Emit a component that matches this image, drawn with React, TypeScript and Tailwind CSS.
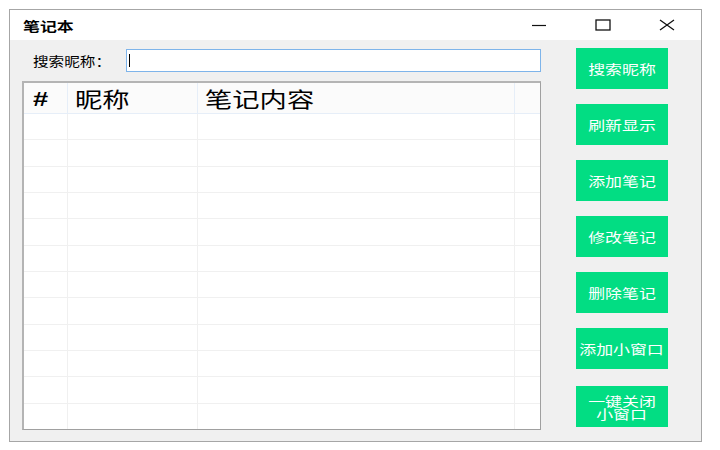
import React from "react"

const font = { fontFamily: '"Noto Sans CJK SC", "Noto Sans", sans-serif' }

const buttons = ["搜索昵称", "刷新显示", "添加笔记", "修改笔记", "删除笔记", "添加小窗口"]

function TitleBar() {
  return (
    <div className="flex h-[30px] items-center justify-between bg-white">
      <span className="ml-[13px] inline-block origin-left scale-x-[1.3] text-[13px] font-semibold leading-none text-black">
        笔记本
      </span>
      <div className="mr-[2px] flex h-full items-center">
        <div className="flex w-[64px] justify-center">
          <svg width="16" height="12" viewBox="0 0 16 12">
            <line x1="1" y1="6.5" x2="15" y2="6.5" stroke="#111" strokeWidth="1.2" />
          </svg>
        </div>
        <div className="flex w-[64px] justify-center">
          <svg width="16" height="12" viewBox="0 0 16 12">
            <rect x="1" y="1" width="14" height="10" fill="none" stroke="#111" strokeWidth="1.3" />
          </svg>
        </div>
        <div className="flex w-[64px] justify-center">
          <svg width="16" height="12" viewBox="0 0 16 12">
            <path d="M1 1L15 11M15 1L1 11" stroke="#111" strokeWidth="1.3" />
          </svg>
        </div>
      </div>
    </div>
  )
}

function NotesTable() {
  const rows = Array.from({ length: 12 })
  return (
    <div className="mt-[9px] flex h-[349px] w-[519px] flex-col border border-[#a0a0a0] border-l-2 border-t-2 border-l-[#b4b4b4] border-t-[#b4b4b4] bg-white">
      {/* header */}
      <div className="flex h-[31px] border-b border-[#e6eef8] bg-[#fbfbfb] text-[21px] leading-none text-black">
        <div className="flex w-[44px] items-center border-r border-[#e6eef8] pl-[9px]">
          <span className="inline-block origin-left scale-x-[1.3] font-bold" style={{ fontFamily: '"Liberation Sans", sans-serif' }}>
            #
          </span>
        </div>
        <div className="flex w-[130px] items-center border-r border-[#e6eef8] pl-[7px]">
          <span className="inline-block origin-left scale-x-[1.3]">昵称</span>
        </div>
        <div className="flex w-[317px] items-center border-r border-[#e6eef8] pl-[7px]">
          <span className="inline-block origin-left scale-x-[1.3]">笔记内容</span>
        </div>
        <div className="flex-1" />
      </div>
      {/* body */}
      <div className="flex flex-1 flex-col">
        {rows.map((_, i) => (
          <div key={i} className={`flex flex-1 ${i > 0 ? "border-t border-[#f0f0f0]" : ""}`}>
            <div className="w-[44px] border-r border-[#f0f0f0]" />
            <div className="w-[130px] border-r border-[#f0f0f0]" />
            <div className="w-[317px] border-r border-[#f0f0f0]" />
            <div className="flex-1" />
          </div>
        ))}
      </div>
    </div>
  )
}

function GreenButton({ children, className = "" }: { children: React.ReactNode; className?: string }) {
  return (
    <button
      className={`flex h-[41px] w-[92px] flex-col items-center justify-center bg-[#02dd83] text-[13px] leading-none text-white ${className}`}
    >
      {children}
    </button>
  )
}

export default function App() {
  return (
    <div className="h-[450px] w-[720px] bg-white pl-[9px] pt-[9px]" style={font}>
      <div className="flex h-[433px] w-[693px] flex-col border border-[#a6a6a6]">
        <TitleBar />
        <div className="flex flex-1 bg-[#f0f0f0]">
          {/* left side */}
          <div className="flex flex-col pl-[12px] pt-[9px]">
            <div className="flex h-[23px] items-center">
              <label className="w-[104px] pl-[11px] text-[13px] leading-none text-black">
                <span className="inline-block origin-left scale-x-[1.2]">搜索昵称：</span>
              </label>
              <div className="flex h-[23px] w-[415px] items-center border border-[#7eb4ea] bg-white">
                <span className="ml-[2px] h-[13px] w-px bg-black" />
              </div>
            </div>
            <NotesTable />
          </div>
          {/* right side buttons */}
          <div className="ml-[35px] flex flex-col gap-[15px] pt-[8px]">
            {buttons.map((b) => (
              <GreenButton key={b}>
                <span className="inline-block scale-x-[1.3]">{b}</span>
              </GreenButton>
            ))}
            <GreenButton className="mt-[2px]">
              <span className="inline-block scale-x-[1.3] leading-[13px]">一键关闭</span>
              <span className="inline-block scale-x-[1.3] leading-[13px]">小窗口</span>
            </GreenButton>
          </div>
        </div>
      </div>
    </div>
  )
}
